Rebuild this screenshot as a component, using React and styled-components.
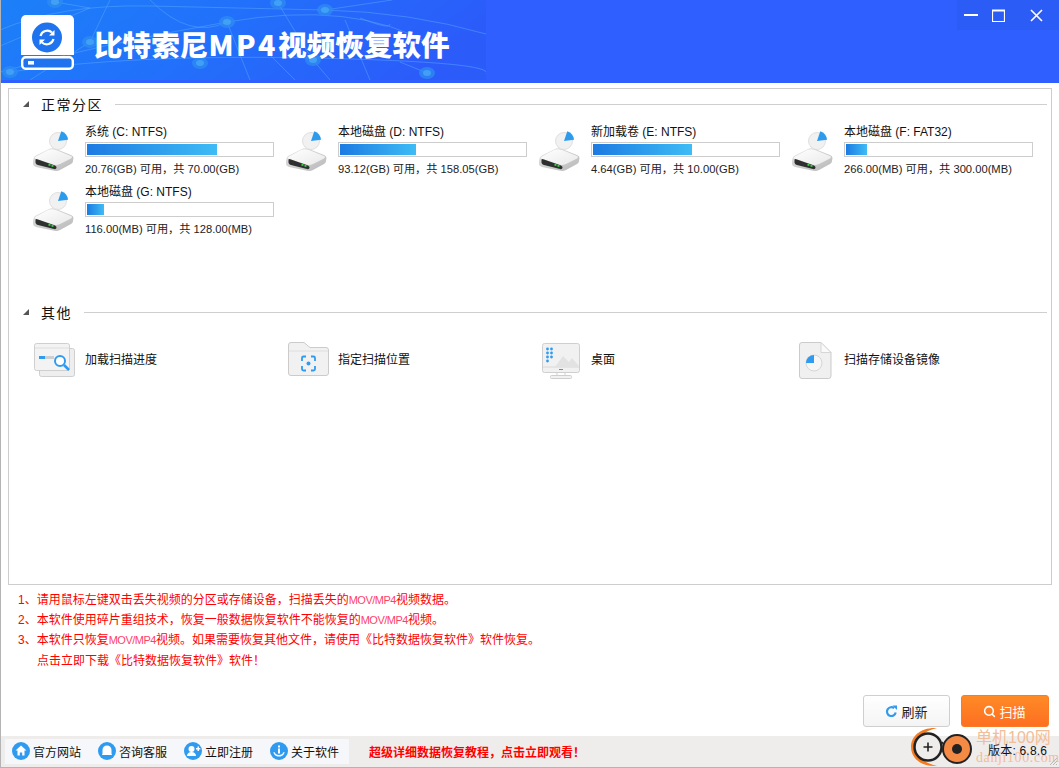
import React from "react";
import styled, { createGlobalStyle } from "styled-components";
import { Search } from "lucide-react";

const GlobalStyle = createGlobalStyle`
  html, body { margin: 0; padding: 0; background: #fff; }
  body { font-family: "Liberation Sans", "Noto Sans CJK SC", sans-serif; font-size: 12px; color: #111; }
  * { box-sizing: border-box; }
`;

const Window = styled.div`
  width: 1060px;
  height: 768px;
  display: flex;
  flex-direction: column;
  overflow: hidden;
  position: relative;
  border-left: 1px solid #b4b4b4;
  border-bottom: 1px solid #b4b4b4;
  border-right: 1px solid #d8d8d8;
`;

const Header = styled.header`
  height: 83px;
  flex: none;
  margin: 0 -1px;
  display: flex;
  align-items: flex-start;
  position: relative;
  background: #305fff;
`;

const HeaderArt = styled.svg`
  position: absolute;
  left: 0;
  top: 0;
`;

const Logo = styled.svg`
  position: relative;
  margin: 15px 0 0 21px;
  flex: none;
`;

const Title = styled.h1`
  position: relative;
  margin: 26px 0 0 20px;
  color: #fff;
  font-family: "Noto Sans CJK SC", sans-serif;
  font-weight: 900;
  font-size: 28.6px;
  line-height: 36px;
  white-space: nowrap;
`;

const TitleLatin = styled.span`
  letter-spacing: 2.5px;
`;

const WindowButtons = styled.div`
  position: absolute;
  right: 0;
  top: 0;
  width: 103px;
  height: 30px;
  display: flex;
  align-items: center;
  background: #2c5cf6;
`;

const WindowButton = styled.button`
  width: ${(p) => p.$width}px;
  height: 30px;
  padding: 0 0 0 ${(p) => p.$inset}px;
  border: 0;
  background: none;
  display: flex;
  align-items: center;
  justify-content: flex-start;
`;

const Panel = styled.main`
  height: 497px;
  flex: none;
  margin: 5px 7px 0;
  border: 1px solid #cdcdcd;
  padding-top: 7px;
`;

const SectionHead = styled.div`
  height: 16px;
  display: flex;
  align-items: center;
  padding: 0 4px 0 14px;
`;

const Arrow = styled.span`
  width: 0;
  height: 0;
  border-style: solid;
  border-width: 0 0 6px 6px;
  border-color: transparent transparent #555 transparent;
  margin-right: 12px;
`;

const SectionTitle = styled.span`
  font-size: 14px;
  letter-spacing: 1.5px;
  font-family: "Noto Sans CJK SC", sans-serif;
  color: #111;
  margin-right: 12px;
`;

const Rule = styled.span`
  flex: 1;
  height: 1px;
  background: #cfcfcf;
`;

const DriveGrid = styled.div`
  display: grid;
  grid-template-columns: repeat(4, 253px);
  grid-auto-rows: 60px;
  min-height: 192px;
  padding: 12px 0 0 23px;
`;

const Drive = styled.div`
  display: flex;
  align-items: flex-start;
`;

const DriveIcon = styled.svg`
  flex: none;
  margin: 7px 7px 0 0;
`;

const DriveBody = styled.div`
  width: 189px;
`;

const DriveName = styled.div`
  height: 18px;
  line-height: 17px;
  font-size: 12px;
  color: #111;
  white-space: nowrap;
`;

const Bar = styled.div`
  height: 15px;
  border: 1px solid #cdcdcd;
  padding: 1px;
  background: #fff;
`;

const BarFill = styled.div`
  height: 100%;
  background: linear-gradient(90deg, #1c7be2, #3ebcf5);
`;

const DriveInfo = styled.div`
  margin-top: 4px;
  line-height: 16px;
  font-size: 11.2px;
  color: #222;
  white-space: nowrap;
`;

const OtherGrid = styled.div`
  display: grid;
  grid-template-columns: repeat(4, 253px);
  padding: 20px 0 0 23px;
`;

const OtherItem = styled.div`
  height: 40px;
  display: flex;
  align-items: flex-start;
  line-height: 40px;
  font-size: 12px;
  color: #111;
`;

const OtherIcon = styled.svg`
  flex: none;
  margin: 2px 7px 0 0;
`;

const Notes = styled.section`
  padding: 5px 0 0 17px;
  color: #f00;
  font-size: 12px;
  line-height: 20px;
`;

const NoteLine = styled.div`
  height: ${(p) => (p.$last ? "21px" : "20px")};
  padding-top: ${(p) => (p.$last ? "1px" : "0")};
  padding-left: ${(p) => (p.$indent ? "19px" : "0")};
  white-space: nowrap;
`;

const Thin = styled.span`
  font-size: 11px;
  letter-spacing: -0.5px;
  color: #ff3f6a;
`;

const Actions = styled.div`
  flex: 1;
  display: flex;
  justify-content: flex-end;
  align-items: flex-end;
  gap: 11px;
  padding: 0 10px 9px 0;
`;

const ActionButton = styled.button`
  width: ${(p) => (p.$primary ? "88px" : "87px")};
  height: 32px;
  display: flex;
  align-items: center;
  justify-content: center;
  gap: 3px;
  padding: 0 ${(p) => (p.$primary ? "1px" : "0")} 0 0;
  font-family: inherit;
  font-size: 13px;
  border-radius: 3px;
  color: ${(p) => (p.$primary ? "#fff" : "#222")};
  border: 1px solid ${(p) => (p.$primary ? "#fb7a24" : "#cfcfcf")};
  background: ${(p) =>
    p.$primary ? "linear-gradient(180deg, #ff8a26, #fd6f21)" : "linear-gradient(180deg, #fff, #f4f4f4)"};
`;

const BottomBar = styled.footer`
  height: 31px;
  flex: none;
  display: flex;
  align-items: center;
  background: #efecec;
  padding: 0 0 1px 4px;
  position: relative;
`;

const LinkGroup = styled.nav`
  height: 25px;
  display: flex;
  align-items: center;
  background: #f5f7fa;
  padding-left: 7px;
  width: 344px;
  flex: none;
  margin-right: 20px;
`;

const LinkItem = styled.a`
  width: 86px;
  flex: none;
  display: flex;
  align-items: center;
  gap: 3px;
  color: #111;
  font-size: 12px;

  &:last-child {
    width: 79px;
  }
`;

const Promo = styled.span`
  color: #f00;
  font-size: 12px;
  font-weight: 700;
  font-family: "Noto Sans CJK SC", sans-serif;
`;

const Watermark = styled.div`
  position: absolute;
  right: 0;
  bottom: 0;
  width: 150px;
  height: 38px;
`;

const WatermarkLogo = styled.svg`
  position: absolute;
  left: 0;
  top: -2px;
`;

const WatermarkName = styled.span`
  position: absolute;
  left: 67px;
  top: 0;
  color: #f3bd98;
  font-size: 16px;
  line-height: 18px;
  white-space: nowrap;
`;

const WatermarkUrl = styled.span`
  position: absolute;
  left: 67px;
  top: 21px;
  color: #f3bd98;
  font-size: 14px;
  line-height: 16px;
  letter-spacing: 0.6px;
  font-family: "Liberation Serif", serif;
`;

const Version = styled.span`
  position: absolute;
  left: 79px;
  top: 14px;
  font-size: 12px;
  line-height: 16px;
  letter-spacing: 0.2px;
  color: #111;
  white-space: nowrap;
`;

const Grip = styled.svg`
  position: absolute;
  right: 1px;
  bottom: 1px;
`;

const NET_NODES = [
  [55, 2], [90, 42], [227, 22], [200, 63], [278, 3], [325, 10], [313, 60], [427, 73], [10, 72],
];

const NET_LINES = [
  "M0 30 Q60 4 150 6 T325 10 T486 34",
  "M0 72 Q100 44 227 22 T430 44",
  "M10 72 Q130 54 313 58 T486 74",
  "M55 2 L90 8 L0 46",
  "M110 0 L90 42 L30 80",
  "M150 0 Q190 40 227 22 L250 80",
  "M278 3 Q300 40 313 60 L330 80",
  "M392 0 L325 10",
  "M360 18 Q390 30 390 24",
  "M345 20 L370 80",
  "M427 73 L400 62",
  "M270 55 L295 80",
];

const HeaderPattern = () => (
  <HeaderArt width="486" height="80" viewBox="0 0 486 80">
    <defs>
      <linearGradient id="headerBg" x1="0" y1="0" x2="1" y2="0.2">
        <stop offset="0" stopColor="#1c80f8" />
        <stop offset="0.5" stopColor="#2270fb" />
        <stop offset="1" stopColor="#2b5cfa" />
      </linearGradient>
    </defs>
    <rect width="486" height="80" fill="url(#headerBg)" />
    <g fill="none" stroke="#5aa8ff" strokeOpacity="0.5" strokeWidth="1">
      {NET_LINES.map((d) => (
        <path key={d} d={d} />
      ))}
    </g>
    {NET_NODES.map(([x, y]) => (
      <g key={`${x}-${y}`}>
        <ellipse cx={x} cy={y} rx="8" ry="6" fill="#2f8cf2" fillOpacity="0.75" />
        <ellipse cx={x} cy={y} rx="4" ry="3" fill="#47a6f5" fillOpacity="0.8" />
      </g>
    ))}
  </HeaderArt>
);

const AppLogo = () => (
  <Logo width="53" height="55" viewBox="0 0 53 55">
    <path d="M5 0h43a5 5 0 0 1 5 5v35H0V5a5 5 0 0 1 5-5z" fill="#fff" />
    <circle cx="26" cy="22.500" r="15" fill="#1f73ee" />
    <path d="M19.500 21a7 7 0 0 1 11.500-3.500M32.500 24a7 7 0 0 1-11.500 3.500" fill="none" stroke="#fff" strokeWidth="2.200" />
    <path d="M33.500 15v5.500h-5.500zM18.500 30v-5.500h5.500z" fill="#fff" />
    <rect x="1.200" y="42.200" width="50.600" height="11.600" rx="3.500" fill="#1f73ee" stroke="#fff" strokeWidth="2.400" />
    <rect x="7" y="46" width="6" height="3.600" fill="#fff" />
  </Logo>
);

const DriveGlyph = () => (
  <DriveIcon width="46" height="42" viewBox="0 0 46 42">
    <defs>
      <linearGradient id="driveShell" x1="0" y1="0" x2="1" y2="1">
        <stop offset="0" stopColor="#e4e4e4" />
        <stop offset="1" stopColor="#b8b8b8" />
      </linearGradient>
      <linearGradient id="driveTop" x1="0" y1="0" x2="1" y2="1">
        <stop offset="0" stopColor="#ffffff" />
        <stop offset="1" stopColor="#e9e9e9" />
      </linearGradient>
    </defs>
    <path d="M3 25 Q1 27 1 30 L1 33 Q1 35 4 36 L21 39.500 Q25 40.500 28 39 L39 33 Q41 32 41 30 L41.500 27 Q41.500 25 39 24 L24 18 Q20 16.500 16 18.500 Z" fill="url(#driveShell)" />
    <path d="M3 27.500 Q2 26.500 4 25.500 L16 19 Q20 17.500 24 19 L39 25 Q41 26 39 27.500 L28 33 Q25 34.500 22 33.800 Z" fill="url(#driveTop)" />
    <path d="M3.500 28.500 Q4 27.500 6 28.500 L23 34.500 Q25 35.500 24.500 37 Q24 38.500 22 38 L6 34 Q3 33 3.500 30 Z" fill="#2e302f" />
    <rect x="16.500" y="33" width="2" height="1.800" fill="#3bd24b" />
    <rect x="19.500" y="34" width="2" height="1.800" fill="#3bd24b" />
    <circle cx="26" cy="10" r="8.500" fill="#f1f1f1" stroke="#d8d8d8" strokeWidth="0.800" />
    <path d="M26 10 L29.300 .3 A10 10 0 0 1 36 8.700 Z" fill="#2d9bec" />
  </DriveIcon>
);

const ProgressFileGlyph = () => (
  <OtherIcon width="46" height="38" viewBox="0 0 46 38">
    <rect x="7.500" y="6.500" width="35" height="28" rx="2" fill="#eeeeee" stroke="#cfcfcf" />
    <rect x="2.500" y="1.500" width="35" height="27" rx="2" fill="#f3f3f3" stroke="#cfcfcf" />
    <path d="M3 6h34" stroke="#dedede" />
    <rect x="7" y="14" width="6" height="3" fill="#2f9bf0" />
    <rect x="13" y="14" width="9" height="3" fill="#cfcfcf" />
    <circle cx="28" cy="19" r="5" fill="#fff" stroke="#2f9bf0" strokeWidth="2" />
    <path d="M32 23l5 5" stroke="#2f9bf0" strokeWidth="2.600" />
  </OtherIcon>
);

const FolderGlyph = () => (
  <OtherIcon width="46" height="38" viewBox="0 0 46 38">
    <path d="M6 .5h13l6 5h16a2.500 2.500 0 0 1 2.500 2.500V31a2.500 2.500 0 0 1-2.500 2.500H6A2.500 2.500 0 0 1 3.500 31V3A2.500 2.500 0 0 1 6 .5z" fill="#f1f1f1" stroke="#cbcbcb" />
    <path d="M4 9h39" stroke="#dedede" />
    <path d="M17 19v-3a1.500 1.500 0 0 1 1.500-1.500h2.500M26 14.500h2.500A1.500 1.500 0 0 1 30 16v3M30 24v3a1.500 1.500 0 0 1-1.500 1.500H26M21 28.500h-2.500A1.500 1.500 0 0 1 17 27v-3" fill="none" stroke="#2f9bf0" strokeWidth="1.800" />
    <circle cx="23.500" cy="21.500" r="2" fill="#2f9bf0" />
  </OtherIcon>
);

const DesktopGlyph = () => (
  <OtherIcon width="46" height="38" viewBox="0 0 46 38">
    <rect x="4.500" y="1.500" width="37" height="29" rx="2" fill="#f1f1f1" stroke="#cfcfcf" />
    <path d="M5 25h36" stroke="#d8d8d8" />
    <path d="M17 25l8-11 6 6 3-4 7 8v1z" fill="#e2e2e2" />
    <g fill="#2f9bf0">
      <circle cx="9.500" cy="7" r="1.400" /><circle cx="13.500" cy="7" r="1.400" />
      <circle cx="9.500" cy="11" r="1.400" /><circle cx="13.500" cy="11" r="1.400" />
      <circle cx="9.500" cy="15" r="1.400" /><circle cx="13.500" cy="15" r="1.400" />
      <circle cx="9.500" cy="19" r="1.400" />
    </g>
    <rect x="21" y="27" width="4" height="1" fill="#2f9bf0" />
    <path d="M19 31v3M27 31v3" stroke="#cfcfcf" />
    <rect x="12.500" y="33.500" width="21" height="3" rx="1" fill="#f1f1f1" stroke="#cfcfcf" />
  </OtherIcon>
);

const ImageFileGlyph = () => (
  <OtherIcon width="46" height="38" viewBox="0 0 46 38">
    <path d="M11 .5h19l10 10V34a2.500 2.500 0 0 1-2.500 2.500H11A2.500 2.500 0 0 1 8.500 34V3A2.500 2.500 0 0 1 11 .5z" fill="#f0f0f0" stroke="#cbcbcb" />
    <path d="M30 .5v10h10z" fill="#fafafa" stroke="#d6d6d6" />
    <circle cx="23" cy="21" r="8" fill="#f6f6f6" stroke="#d6d6d6" />
    <path d="M23 13v8h-8a8 8 0 0 1 8-8z" fill="#2f9bf0" />
  </OtherIcon>
);

const LinkIcon = ({ kind }) => (
  <svg width="18" height="18" viewBox="0 0 18 18">
    <circle cx="9" cy="9" r="9" fill="#2f9bf0" />
    {kind === "home" && <path d="M9 3.500L3.500 8.500h2v5h2.300v-3h2.400v3h2.300v-5h2z" fill="#fff" />}
    {kind === "chat" && <path d="M9 3.500c-2.600 0-4.500 2-4.500 4.500v3.500L4 13h10l-.5-1.500V8c0-2.500-1.900-4.500-4.500-4.500z" fill="#fff" />}
    {kind === "user" && <path d="M7.500 4a3 3 0 1 1 0 6 3 3 0 0 1 0-6zM3 14c0-2.400 2-4 4.500-4s4.500 1.600 4.500 4zM12 6h1.500V4.500H15V6h1.300v1.500H15V9h-1.500V7.500H12z" fill="#fff" />}
    {kind === "info" && <path d="M8 3.500h2v2H8zM8 6.500h2v5H8zM3.500 10c0 2.600 2.400 4.500 5.500 4.500s5.500-1.900 5.500-4.500l-1.500.5c0 1.300-1.700 2.500-4 2.500s-4-1.200-4-2.500z" fill="#fff" />}
  </svg>
);

const RefreshGlyph = () => (
  <svg width="13" height="13" viewBox="0 0 13 13">
    <path d="M10.700 7.500a4.400 4.400 0 1 1-1.500-4.300" fill="none" stroke="#2f9bf0" strokeWidth="2.200" />
    <path d="M7.500 .5h4.500V5z" fill="#2f9bf0" />
  </svg>
);

const DRIVES = [
  { name: "系统 (C: NTFS)", free: "20.76(GB)", total: "70.00(GB)", used: (70 - 20.76) / 70 },
  { name: "本地磁盘 (D: NTFS)", free: "93.12(GB)", total: "158.05(GB)", used: (158.05 - 93.12) / 158.05 },
  { name: "新加载卷 (E: NTFS)", free: "4.64(GB)", total: "10.00(GB)", used: (10 - 4.64) / 10 },
  { name: "本地磁盘 (F: FAT32)", free: "266.00(MB)", total: "300.00(MB)", used: (300 - 266) / 300 },
  { name: "本地磁盘 (G: NTFS)", free: "116.00(MB)", total: "128.00(MB)", used: (128 - 116) / 128 },
];

const OTHERS = [
  { label: "加载扫描进度", Icon: ProgressFileGlyph },
  { label: "指定扫描位置", Icon: FolderGlyph },
  { label: "桌面", Icon: DesktopGlyph },
  { label: "扫描存储设备镜像", Icon: ImageFileGlyph },
];

const LINKS = [
  { label: "官方网站", kind: "home" },
  { label: "咨询客服", kind: "chat" },
  { label: "立即注册", kind: "user" },
  { label: "关于软件", kind: "info" },
];

const App = () => (
  <>
    <GlobalStyle />
    <Window>
      <Header>
        <HeaderPattern />
        <AppLogo />
        <Title>
          比特索尼<TitleLatin>MP4</TitleLatin>视频恢复软件
        </Title>
        <WindowButtons>
          <WindowButton aria-label="最小化" $width={28} $inset={7}>
            <svg width="14" height="14" viewBox="0 0 14 14">
              <path d="M0 7h14" stroke="#fff" strokeWidth="2" />
            </svg>
          </WindowButton>
          <WindowButton aria-label="最大化" $width={27} $inset={7}>
            <svg width="13" height="13" viewBox="0 0 13 13">
              <path d="M.5 1.500h12v11H.5z" fill="none" stroke="#fff" strokeWidth="1.200" />
              <path d="M0 1.500h13" stroke="#fff" strokeWidth="2" />
            </svg>
          </WindowButton>
          <WindowButton aria-label="关闭" $width={48} $inset={18}>
            <svg width="13" height="13" viewBox="0 0 13 13">
              <path d="M1 1l11 11M12 1L1 12" stroke="#fff" strokeWidth="1.600" />
            </svg>
          </WindowButton>
        </WindowButtons>
      </Header>

      <Panel>
        <SectionHead>
          <Arrow />
          <SectionTitle>正常分区</SectionTitle>
          <Rule />
        </SectionHead>
        <DriveGrid>
          {DRIVES.map((d) => (
            <Drive key={d.name}>
              <DriveGlyph />
              <DriveBody>
                <DriveName>{d.name}</DriveName>
                <Bar>
                  <BarFill style={{ width: `${d.used * 100}%` }} />
                </Bar>
                <DriveInfo>
                  {d.free} 可用，共 {d.total}
                </DriveInfo>
              </DriveBody>
            </Drive>
          ))}
        </DriveGrid>
        <SectionHead>
          <Arrow />
          <SectionTitle>其他</SectionTitle>
          <Rule />
        </SectionHead>
        <OtherGrid>
          {OTHERS.map(({ label, Icon }) => (
            <OtherItem key={label}>
              <Icon />
              {label}
            </OtherItem>
          ))}
        </OtherGrid>
      </Panel>

      <Notes>
        <NoteLine>
          1、请用鼠标左键双击丢失视频的分区或存储设备，扫描丢失的<Thin>MOV/MP4</Thin>视频数据。
        </NoteLine>
        <NoteLine>
          2、本软件使用碎片重组技术，恢复一般数据恢复软件不能恢复的<Thin>MOV/MP4</Thin>视频。
        </NoteLine>
        <NoteLine>
          3、本软件只恢复<Thin>MOV/MP4</Thin>视频。如果需要恢复其他文件，请使用《比特数据恢复软件》软件恢复。
        </NoteLine>
        <NoteLine $indent $last>
          点击立即下载《比特数据恢复软件》软件！
        </NoteLine>
      </Notes>

      <Actions>
        <ActionButton>
          <RefreshGlyph />
          刷新
        </ActionButton>
        <ActionButton $primary>
          <Search size={13} strokeWidth={2.8} color="#fff" />
          扫描
        </ActionButton>
      </Actions>

      <BottomBar>
        <LinkGroup>
          {LINKS.map((l) => (
            <LinkItem key={l.label}>
              <LinkIcon kind={l.kind} />
              {l.label}
            </LinkItem>
          ))}
        </LinkGroup>
        <Promo>超级详细数据恢复教程，点击立即观看！</Promo>
        <Watermark>
          <WatermarkLogo width="66" height="40" viewBox="0 0 66 40">
            <path d="M28 1 C12 0 2 9 2 20 C2 31 12 40 28 39 C16 36 7 30 7 20 C7 10 16 4 28 1 Z" fill="#f47b20" />
            <circle cx="19" cy="20" r="13.500" fill="#efecec" stroke="#222" strokeWidth="2.500" />
            <path d="M14.500 20h9M19 15.500v9" stroke="#222" strokeWidth="1.600" />
            <path d="M33 15l3 4-2 6" fill="none" stroke="#222" strokeWidth="1.500" />
            <circle cx="48" cy="22" r="14" fill="#f58a45" stroke="#222" strokeWidth="2" />
            <circle cx="48" cy="22" r="5" fill="#222" />
          </WatermarkLogo>
          <WatermarkName>单机100网</WatermarkName>
          <WatermarkUrl>danji100.com</WatermarkUrl>
          <Version>版本: 6.8.6</Version>
        </Watermark>
        <Grip width="9" height="9" viewBox="0 0 9 9">
          <path d="M8 1L1 8M8 4L4 8M8 7L7 8" stroke="#b8b8b8" />
        </Grip>
      </BottomBar>
    </Window>
  </>
);

export default App;
